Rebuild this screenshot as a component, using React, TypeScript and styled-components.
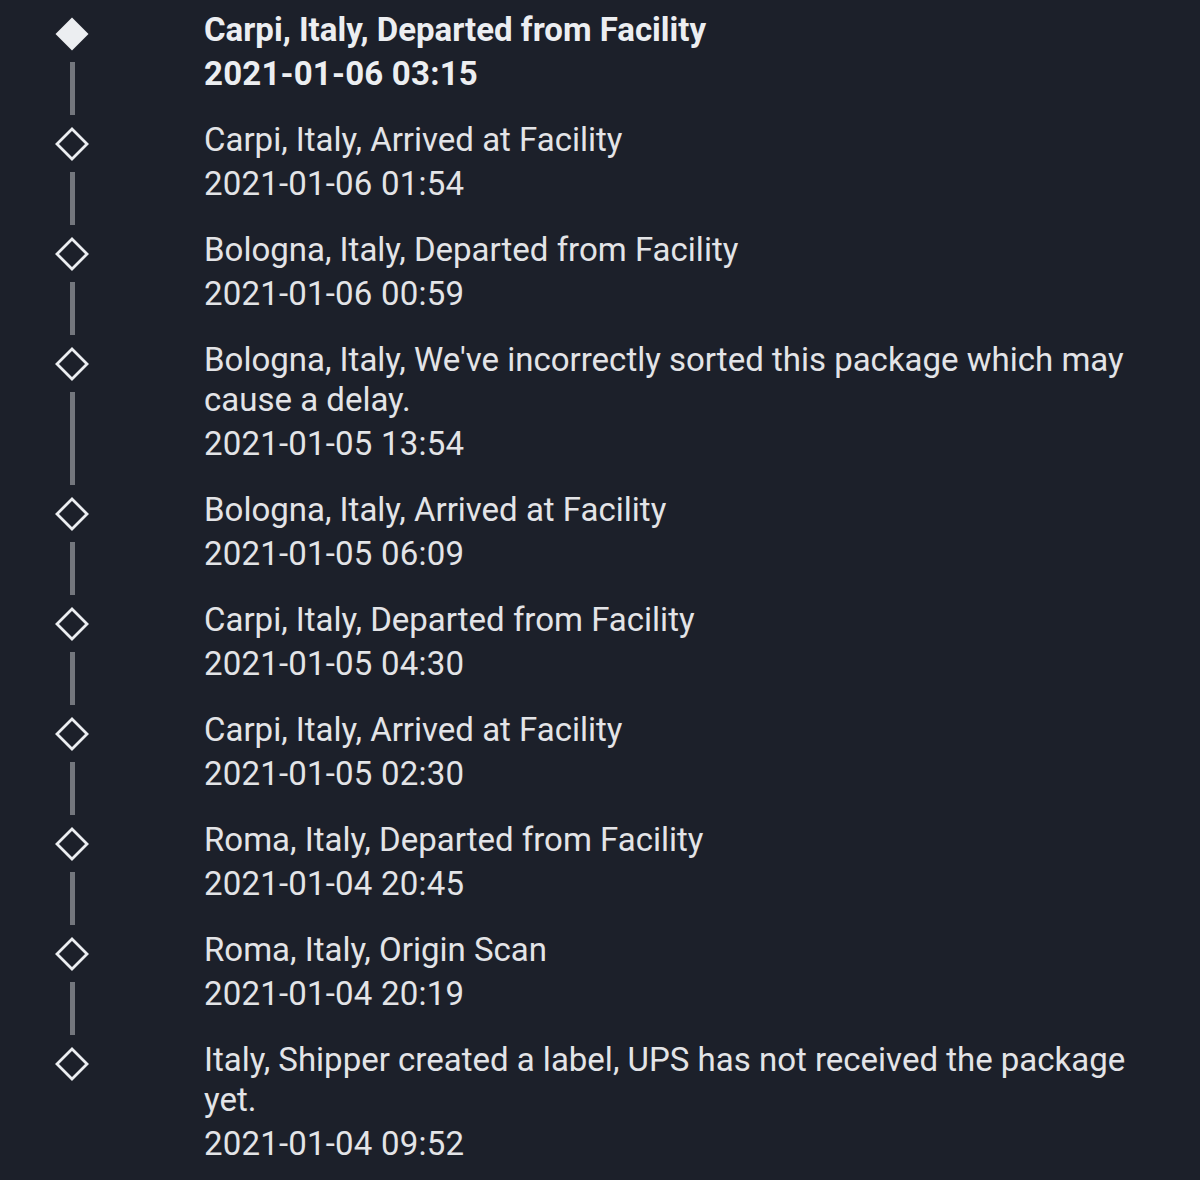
import React from "react";
import styled, { createGlobalStyle } from "styled-components";

const GlobalStyle = createGlobalStyle`
  html, body {
    margin: 0;
    padding: 0;
    background: #1c202a;
  }
  body {
    font-family: Roboto, "Noto Sans", "Liberation Sans", sans-serif;
    color: #e6e7ea;
  }
`;

type Event = { text: string; time: string };

const events: Event[] = [
  { text: "Carpi, Italy, Departed from Facility", time: "2021-01-06 03:15" },
  { text: "Carpi, Italy, Arrived at Facility", time: "2021-01-06 01:54" },
  { text: "Bologna, Italy, Departed from Facility", time: "2021-01-06 00:59" },
  {
    text: "Bologna, Italy, We've incorrectly sorted this package which may cause a delay.",
    time: "2021-01-05 13:54",
  },
  { text: "Bologna, Italy, Arrived at Facility", time: "2021-01-05 06:09" },
  { text: "Carpi, Italy, Departed from Facility", time: "2021-01-05 04:30" },
  { text: "Carpi, Italy, Arrived at Facility", time: "2021-01-05 02:30" },
  { text: "Roma, Italy, Departed from Facility", time: "2021-01-04 20:45" },
  { text: "Roma, Italy, Origin Scan", time: "2021-01-04 20:19" },
  {
    text: "Italy, Shipper created a label, UPS has not received the package yet.",
    time: "2021-01-04 09:52",
  },
];

const Page = styled.div`
  min-height: 1180px;
  box-sizing: border-box;
  padding-top: 8px;
  background: #1c202a;
`;

const Timeline = styled.ol`
  list-style: none;
  margin: 0;
  padding: 0;
  width: 1160px;
`;

const Item = styled.li`
  display: grid;
  grid-template-columns: 144px 1fr;
  column-gap: 60px;
`;

const Rail = styled.div`
  display: flex;
  flex-direction: column;
  align-items: center;
  padding-top: 9px;
  padding-bottom: 3px;
`;

const Connector = styled.div`
  flex: 1;
  width: 5px;
  margin-top: 11px;
  background: #73767d;
`;

const Body = styled.div<{ $current: boolean }>`
  padding-top: 2px;
  padding-bottom: 24px;
  font-size: 33px;
  line-height: 40px;
  font-weight: ${(p) => (p.$current ? 700 : 400)};
  color: ${(p) => (p.$current ? "#eceef1" : "#e3e4e7")};
`;

const Title = styled.div``;

const Time = styled.div`
  margin-top: 4px;
  letter-spacing: 0.2px;
`;

const Diamond: React.FC<{ filled: boolean }> = ({ filled }) => (
  <svg width="34" height="34" viewBox="0 0 34 34" aria-hidden="true">
    <polygon
      points={filled ? "17,0.5 33.5,17 17,33.5 0.5,17" : "17,2 32,17 17,32 2,17"}
      fill={filled ? "#eceef1" : "none"}
      stroke="#eceef1"
      strokeWidth={filled ? 0 : 2.8}
      strokeLinejoin="miter"
    />
  </svg>
);

export default function App() {
  return (
    <Page>
      <GlobalStyle />
      <Timeline>
        {events.map((e, i) => (
          <Item key={i}>
            <Rail>
              <Diamond filled={i === 0} />
              {i < events.length - 1 && <Connector />}
            </Rail>
            <Body $current={i === 0}>
              <Title>{e.text}</Title>
              <Time>{e.time}</Time>
            </Body>
          </Item>
        ))}
      </Timeline>
    </Page>
  );
}
